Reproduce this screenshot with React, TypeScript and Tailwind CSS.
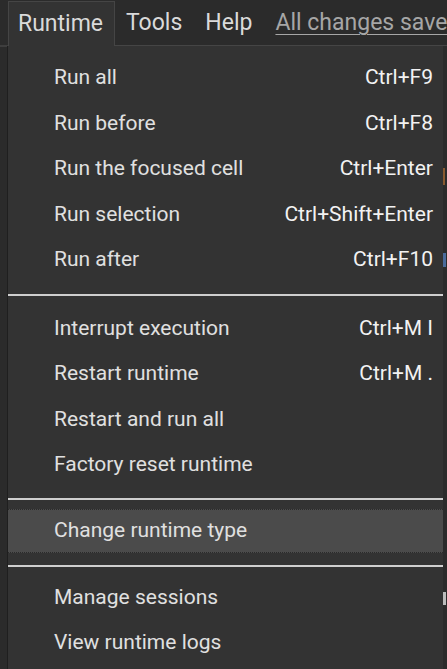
const groups: { label: string; shortcut?: string }[][] = [
  [
    { label: "Run all", shortcut: "Ctrl+F9" },
    { label: "Run before", shortcut: "Ctrl+F8" },
    { label: "Run the focused cell", shortcut: "Ctrl+Enter" },
    { label: "Run selection", shortcut: "Ctrl+Shift+Enter" },
    { label: "Run after", shortcut: "Ctrl+F10" },
  ],
  [
    { label: "Interrupt execution", shortcut: "Ctrl+M I" },
    { label: "Restart runtime", shortcut: "Ctrl+M ." },
    { label: "Restart and run all" },
    { label: "Factory reset runtime" },
  ],
];

function Item({ label, shortcut }: { label: string; shortcut?: string }) {
  return (
    <div className="flex h-[45.5px] items-center justify-between pl-[46px] pr-[10px]">
      <span className="text-[#e0e0e0]">{label}</span>
      {shortcut && <span className="text-[#f2f2f2]">{shortcut}</span>}
    </div>
  );
}

function Separator({ className }: { className: string }) {
  return <div className={`h-[2px] bg-[#cfcfcf] ${className}`} />;
}

export default function App() {
  return (
    <div
      className="h-[669px] w-[447px] overflow-hidden bg-[#2b2b2b]"
      style={{ fontFamily: "Roboto, 'Noto Sans', sans-serif" }}
    >
      {/* Menu bar */}
      <div className="flex h-[46px] items-end text-[23px] text-[#dadada]">
        <div className="h-[48px] w-[8px] shrink-0 border-b border-[#3e3e3e]" />
        <div className="flex h-[45px] w-[107px] shrink-0 items-center border-x border-t border-[#454545] bg-[#333333] pt-[1px] pl-[9px]">
          Runtime
        </div>
        <div className="flex h-[46px] min-w-0 flex-1 items-center gap-[23px] overflow-hidden border-b border-[#454545] pt-[1px] pl-[11px] whitespace-nowrap">
          <span>Tools</span>
          <span>Help</span>
          <span className="text-[#a6a6a6] underline decoration-1 underline-offset-[4px]">All changes saved</span>
        </div>
      </div>

      <div className="flex">
        <div className="w-[7px] shrink-0 border-t border-[#3e3e3e]" />
        {/* Dropdown */}
        <div className="w-[436px] shrink-0 border-l border-[#1f1f1f] bg-[#333333] pt-[9px] text-[21px] leading-none">
          {groups[0].map((it) => (
            <Item key={it.label} {...it} />
          ))}
          <Separator className="mt-[11px] mb-[10px]" />
          {groups[1].map((it) => (
            <Item key={it.label} {...it} />
          ))}
          <Separator className="mt-[10px] mb-[9px]" />
          <div className="flex h-[44px] items-center border-y border-dotted border-[#2a2a2a] bg-[#4b4b4b] pl-[46px] text-[#e0e0e0]">
            Change runtime type
          </div>
          <Separator className="mt-[12px] mb-[8px]" />
          <Item label="Manage sessions" />
          <Item label="View runtime logs" />
          <div className="h-[40px]" />
        </div>
        {/* Edge of the page behind the menu */}
        <div className="flex w-[4px] shrink-0 flex-col">
          <div className="mt-[122px] h-[17px] w-[2px] bg-[#8a5a30]" />
          <div className="mt-[68px] h-[14px] w-[3px] bg-[#4a6a9a]" />
          <div className="mt-[325px] h-[13px] w-[3px] bg-[#bbbbbb]" />
        </div>
      </div>
    </div>
  );
}
